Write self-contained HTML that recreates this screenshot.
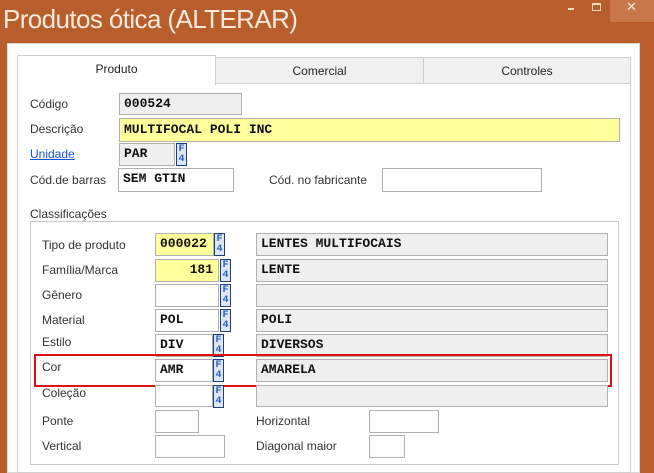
<!DOCTYPE html>
<html><head><meta charset="utf-8"><style>
*{margin:0;padding:0;box-sizing:border-box}
body{width:654px;height:471px;overflow:hidden;background:#b85d2c;position:relative;font-family:"Liberation Sans",sans-serif;font-size:12px;color:#222}
.a{position:absolute}
.t{font-size:26px;color:#fbe9dc;left:3px;top:4px;letter-spacing:-0.6px}
.in{position:absolute;border:1px solid #b0b0b0;background:#fff;font-family:"Liberation Mono",monospace;font-weight:bold;font-size:13px;line-height:20px;padding-left:4px;color:#111}
.y{background:#ffff9c}
.g{background:#efefef}
.lb{position:absolute;font-size:12px;color:#333}
.f4{position:absolute;width:11px;height:23px;border:1px solid #1f3f7a;background:#dce6f4;color:#2a5fc0;font-family:"Liberation Mono",monospace;font-weight:bold;font-size:10px;line-height:10px;text-align:center;padding-top:1px}
.tab{position:absolute;top:57px;height:27px;border:1px solid #d0d0d0;background:#f0f0f0;text-align:center;line-height:27px;font-size:12px}
</style></head><body>
<div class="a t">Produtos ótica (ALTERAR)</div>
<div class="a" style="left:610px;top:0;width:44px;height:22px;background:#c8774a"></div>
<div class="a" style="left:568px;top:8px;width:6px;height:2px;background:#f4d8c4"></div>
<div class="a" style="left:592px;top:3px;width:9px;height:8px;border:1px solid #f4d8c4;border-top-width:2px"></div>
<div class="a" style="left:626px;top:-1px;color:#fbe9dc;font-size:13px">✕</div>
<div class="a" style="left:7px;top:43px;width:633px;height:430px;background:#fff;border:1px solid #d8d8d8"></div>
<div class="a" style="left:17px;top:83px;width:614px;height:390px;border:1px solid #d0d0d0;background:#fff"></div>
<div class="tab" style="left:215px;width:209px">Comercial</div>
<div class="tab" style="left:423px;width:208px">Controles</div>
<div class="tab" style="left:17px;top:55px;width:199px;height:30px;background:#fff;border-bottom:none">Produto</div>

<div class="lb" style="left:30px;top:97px">Código</div>
<div class="in g" style="left:119px;top:93px;width:123px;height:22px">000524</div>
<div class="lb" style="left:30px;top:122px">Descrição</div>
<div class="in y" style="left:119px;top:118px;width:501px;height:24px;line-height:22px">MULTIFOCAL POLI INC</div>
<div class="lb" style="left:30px;top:147px;color:#1a4fd8;text-decoration:underline">Unidade</div>
<div class="in g" style="left:119px;top:143px;width:56px;height:23px">PAR</div>
<div class="f4" style="left:176px;top:143px">F<br>4</div>
<div class="lb" style="left:30px;top:173px">Cód.de barras</div>
<div class="in" style="left:118px;top:168px;width:116px;height:24px">SEM GTIN</div>
<div class="lb" style="left:269px;top:173px">Cód. no fabricante</div>
<div class="in" style="left:382px;top:168px;width:160px;height:24px"></div>

<div class="lb" style="left:30px;top:207px">Classificações</div>
<div class="a" style="left:30px;top:221px;width:589px;height:244px;border:1px solid #c8c8c8"></div>

<div class="lb" style="left:42px;top:238px">Tipo de produto</div>
<div class="in y" style="left:155px;top:233px;width:59px;height:23px">000022</div>
<div class="f4" style="left:214px;top:233px">F<br>4</div>
<div class="in g" style="left:256px;top:233px;width:352px;height:23px">LENTES MULTIFOCAIS</div>

<div class="lb" style="left:42px;top:263px">Família/Marca</div>
<div class="in y" style="left:155px;top:259px;width:64px;height:23px;text-align:right;padding-right:5px">181</div>
<div class="f4" style="left:220px;top:259px">F<br>4</div>
<div class="in g" style="left:256px;top:259px;width:352px;height:23px">LENTE</div>

<div class="lb" style="left:42px;top:288px">Gênero</div>
<div class="in" style="left:155px;top:284px;width:64px;height:23px"></div>
<div class="f4" style="left:220px;top:284px">F<br>4</div>
<div class="in g" style="left:256px;top:284px;width:352px;height:23px"></div>

<div class="lb" style="left:42px;top:313px">Material</div>
<div class="in" style="left:155px;top:309px;width:64px;height:23px">POL</div>
<div class="f4" style="left:220px;top:309px">F<br>4</div>
<div class="in g" style="left:256px;top:309px;width:352px;height:23px">POLI</div>

<div class="lb" style="left:42px;top:335px">Estilo</div>
<div class="in" style="left:155px;top:334px;width:58px;height:23px">DIV</div>
<div class="f4" style="left:213px;top:334px">F<br>4</div>
<div class="in g" style="left:256px;top:334px;width:352px;height:23px">DIVERSOS</div>

<div class="lb" style="left:42px;top:360px">Cor</div>
<div class="in" style="left:155px;top:359px;width:58px;height:23px">AMR</div>
<div class="f4" style="left:213px;top:359px">F<br>4</div>
<div class="in g" style="left:256px;top:359px;width:352px;height:23px">AMARELA</div>
<div class="a" style="left:34px;top:354px;width:578px;height:33px;border:2px solid #e01010"></div>

<div class="lb" style="left:42px;top:386px">Coleção</div>
<div class="in" style="left:155px;top:385px;width:58px;height:22px"></div>
<div class="f4" style="left:213px;top:385px">F<br>4</div>
<div class="in g" style="left:256px;top:385px;width:352px;height:22px"></div>

<div class="lb" style="left:42px;top:414px">Ponte</div>
<div class="in" style="left:155px;top:410px;width:44px;height:23px"></div>
<div class="lb" style="left:256px;top:414px">Horizontal</div>
<div class="in" style="left:369px;top:410px;width:70px;height:23px"></div>

<div class="lb" style="left:42px;top:439px">Vertical</div>
<div class="in" style="left:155px;top:435px;width:70px;height:23px"></div>
<div class="lb" style="left:256px;top:439px">Diagonal maior</div>
<div class="in" style="left:369px;top:435px;width:36px;height:23px"></div>
</body></html>
